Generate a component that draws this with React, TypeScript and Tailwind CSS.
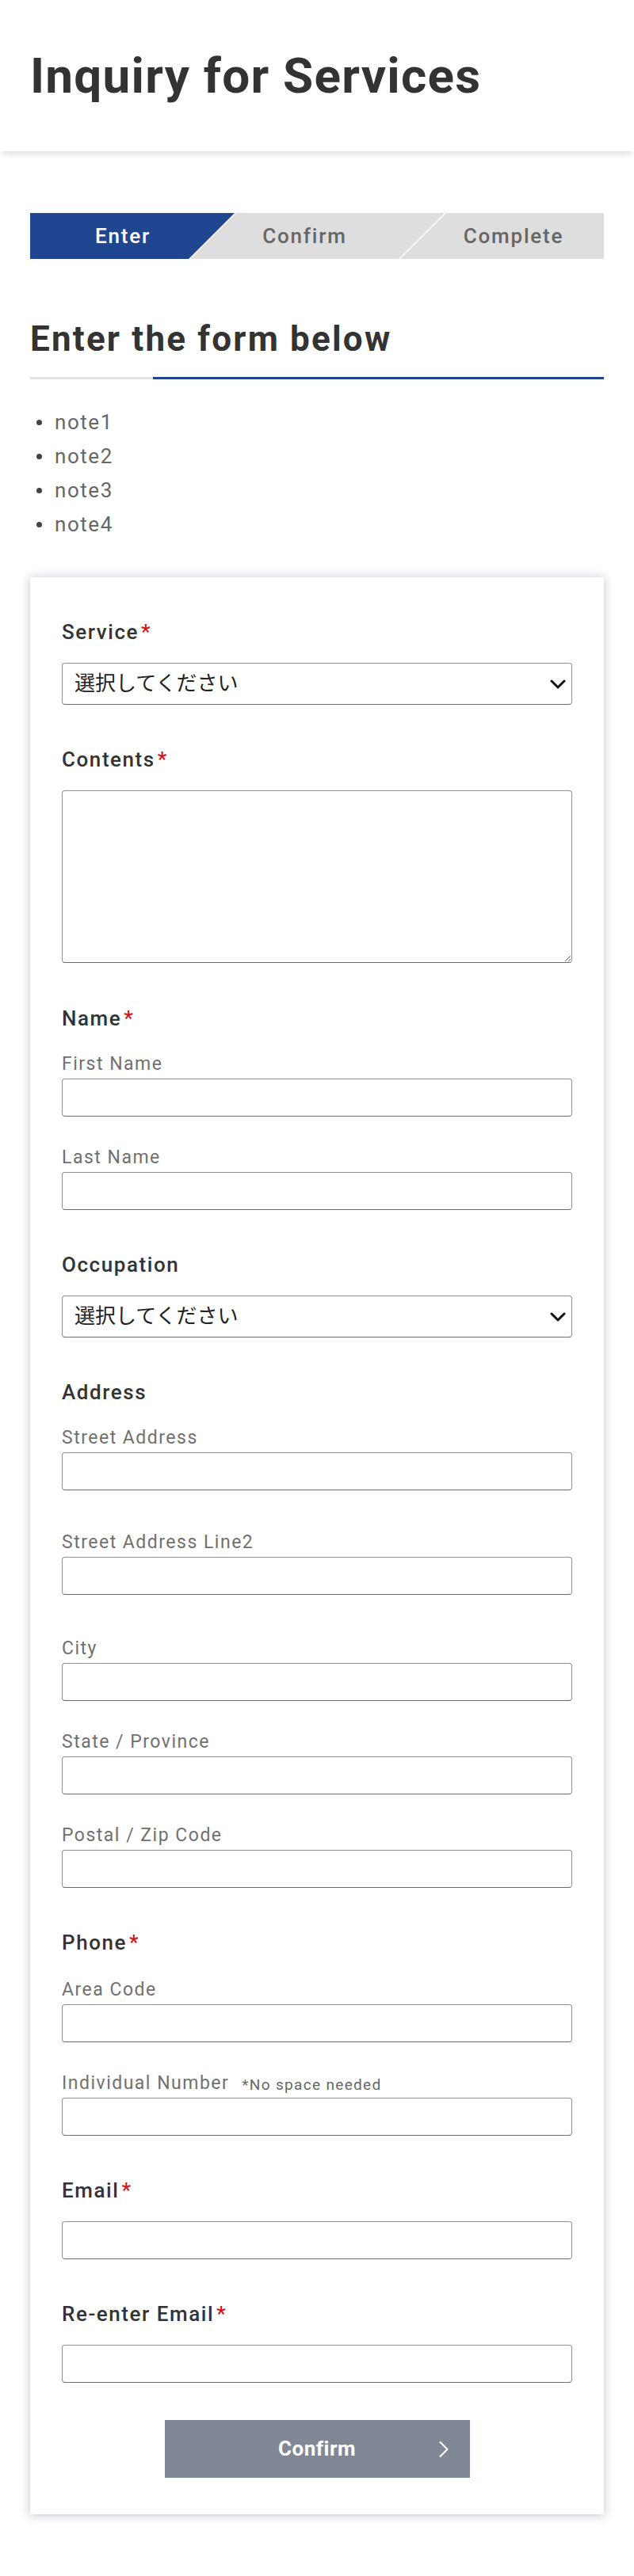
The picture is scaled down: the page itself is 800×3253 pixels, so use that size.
import { ChevronRight } from 'lucide-react'

function Req() {
  return <span className="ml-[3px] text-[#d3121b]">*</span>
}

function Label({ children, required }: { children: React.ReactNode; required?: boolean }) {
  return (
    <div className="text-[26px] leading-[26px] font-medium tracking-[0.06em] text-[#333]">
      {children}
      {required && <Req />}
    </div>
  )
}

function SubLabel({ children, className = '' }: { children: React.ReactNode; className?: string }) {
  return (
    <div className={`text-[23px] leading-[23px] tracking-[0.065em] text-[#707070] ${className}`}>
      {children}
    </div>
  )
}

function TextInput({ className = '' }: { className?: string }) {
  return (
    <input
      type="text"
      className={`block h-[48px] w-full rounded-[4px] border border-[#909090] border-b-[#6c6c6c] bg-white px-3 text-[22px] ${className}`}
    />
  )
}

function Select({ className = '' }: { className?: string }) {
  return (
    <div className={`relative ${className}`}>
      <select className="block h-[53px] w-full appearance-none rounded-[4px] border border-[#909090] border-b-[#6c6c6c] bg-white pl-[15px] font-['Roboto','Noto_Sans_CJK_JP',sans-serif] text-[26px] text-[#222]">
        <option>選択してください</option>
      </select>
      <svg
        className="pointer-events-none absolute right-[8px] top-1/2 -translate-y-1/2"
        width="20"
        height="12"
        viewBox="0 0 20 12"
        fill="none"
      >
        <path d="M2 2l8 8 8-8" stroke="#111" strokeWidth="3" strokeLinecap="round" strokeLinejoin="round" />
      </svg>
    </div>
  )
}

export default function App() {
  const notes = ['note1', 'note2', 'note3', 'note4']

  return (
    <div className="min-h-screen bg-white font-['Roboto',sans-serif] text-[#333]">
      <header className="relative z-10 flex h-[191px] items-center bg-white px-[38px] shadow-[0_5px_8px_-2px_rgba(0,0,0,0.14)]">
        <h1 className="text-[62px] leading-[62px] font-bold tracking-[0.02em] text-[#333]">
          Inquiry for Services
        </h1>
      </header>

      <main className="px-[38px] pt-[78px] pb-[79px]">
        {/* steps */}
        <div className="flex h-[58px] text-[26px] font-medium tracking-[0.07em]">
          <div className="flex w-[258px] shrink-0 items-center justify-center bg-[#204591] pr-[24px] text-white [clip-path:polygon(0_0,100%_0,calc(100%-58px)_100%,0_100%)]">
            Enter
          </div>
          <div className="-ml-[56px] flex w-[321px] shrink-0 items-center justify-center bg-[#dedede] pr-[32px] text-[#666] [clip-path:polygon(58px_0,100%_0,calc(100%-58px)_100%,0_100%)]">
            Confirm
          </div>
          <div className="-ml-[56px] flex w-[257px] shrink-0 items-center justify-center bg-[#dedede] pl-[29px] text-[#666] [clip-path:polygon(58px_0,100%_0,100%_100%,0_100%)]">
            Complete
          </div>
        </div>

        <h2 className="mt-[79px] text-[44px] leading-[44px] font-bold tracking-[0.05em] text-[#333]">
          Enter the form below
        </h2>
        <div className="mt-[26px] flex h-[3px]">
          <div className="w-[155px] bg-[#e2e2e2]" />
          <div className="flex-1 bg-[#204591]" />
        </div>

        <ul className="mt-[33px]">
          {notes.map((n) => (
            <li key={n} className="flex items-center gap-[16px] text-[26px] leading-[43px] tracking-[0.06em] text-[#666]">
              <span className="ml-[8px] h-[7px] w-[7px] rounded-full bg-[#444]" />
              {n}
            </li>
          ))}
        </ul>

        <form className="mt-[45px] bg-white px-[40px] pt-[56px] pb-[46px] shadow-[0_1px_12px_rgba(50,60,90,0.32)]">
          <Label required>Service</Label>
          <Select className="mt-[26px]" />

          <div className="mt-[56px]">
            <Label required>Contents</Label>
            <textarea className="mt-[26px] block h-[218px] w-full rounded-[4px] border border-[#909090] border-b-[#6c6c6c] bg-white" />
          </div>

          <div className="mt-[57px]">
            <Label required>Name</Label>
            <SubLabel className="mt-[33px]">First Name</SubLabel>
            <TextInput className="mt-[7px]" />
            <SubLabel className="mt-[40px]">Last Name</SubLabel>
            <TextInput className="mt-[7px]" />
          </div>

          <div className="mt-[56px]">
            <Label>Occupation</Label>
            <Select className="mt-[26px]" />
          </div>

          <div className="mt-[56px]">
            <Label>Address</Label>
            <SubLabel className="mt-[33px]">Street Address</SubLabel>
            <TextInput className="mt-[7px]" />
            <SubLabel className="mt-[54px]">Street Address Line2</SubLabel>
            <TextInput className="mt-[7px]" />
            <SubLabel className="mt-[56px]">City</SubLabel>
            <TextInput className="mt-[7px]" />
            <SubLabel className="mt-[40px]">State / Province</SubLabel>
            <TextInput className="mt-[7px]" />
            <SubLabel className="mt-[40px]">Postal / Zip Code</SubLabel>
            <TextInput className="mt-[7px]" />
          </div>

          <div className="mt-[56px]">
            <Label required>Phone</Label>
            <SubLabel className="mt-[35px]">Area Code</SubLabel>
            <TextInput className="mt-[7px]" />
            <SubLabel className="mt-[40px] flex items-end">
              Individual Number
              <span className="ml-[16px] text-[19px] leading-[19px] tracking-[0.07em] text-[#666]">
                *No space needed
              </span>
            </SubLabel>
            <TextInput className="mt-[7px]" />
          </div>

          <div className="mt-[56px]">
            <Label required>Email</Label>
            <TextInput className="mt-[26px]" />
          </div>

          <div className="mt-[56px]">
            <Label required>Re-enter Email</Label>
            <TextInput className="mt-[26px]" />
          </div>

          <button
            type="button"
            className="relative mx-auto mt-[47px] flex h-[73px] w-[385px] items-center justify-center bg-[#808896] text-[26px] font-bold tracking-[0.02em] text-white"
          >
            Confirm
            <ChevronRight
              className="absolute right-[15px] top-1/2 -translate-y-1/2"
              size={36}
              strokeWidth={1.4}
            />
          </button>
        </form>
      </main>
    </div>
  )
}
